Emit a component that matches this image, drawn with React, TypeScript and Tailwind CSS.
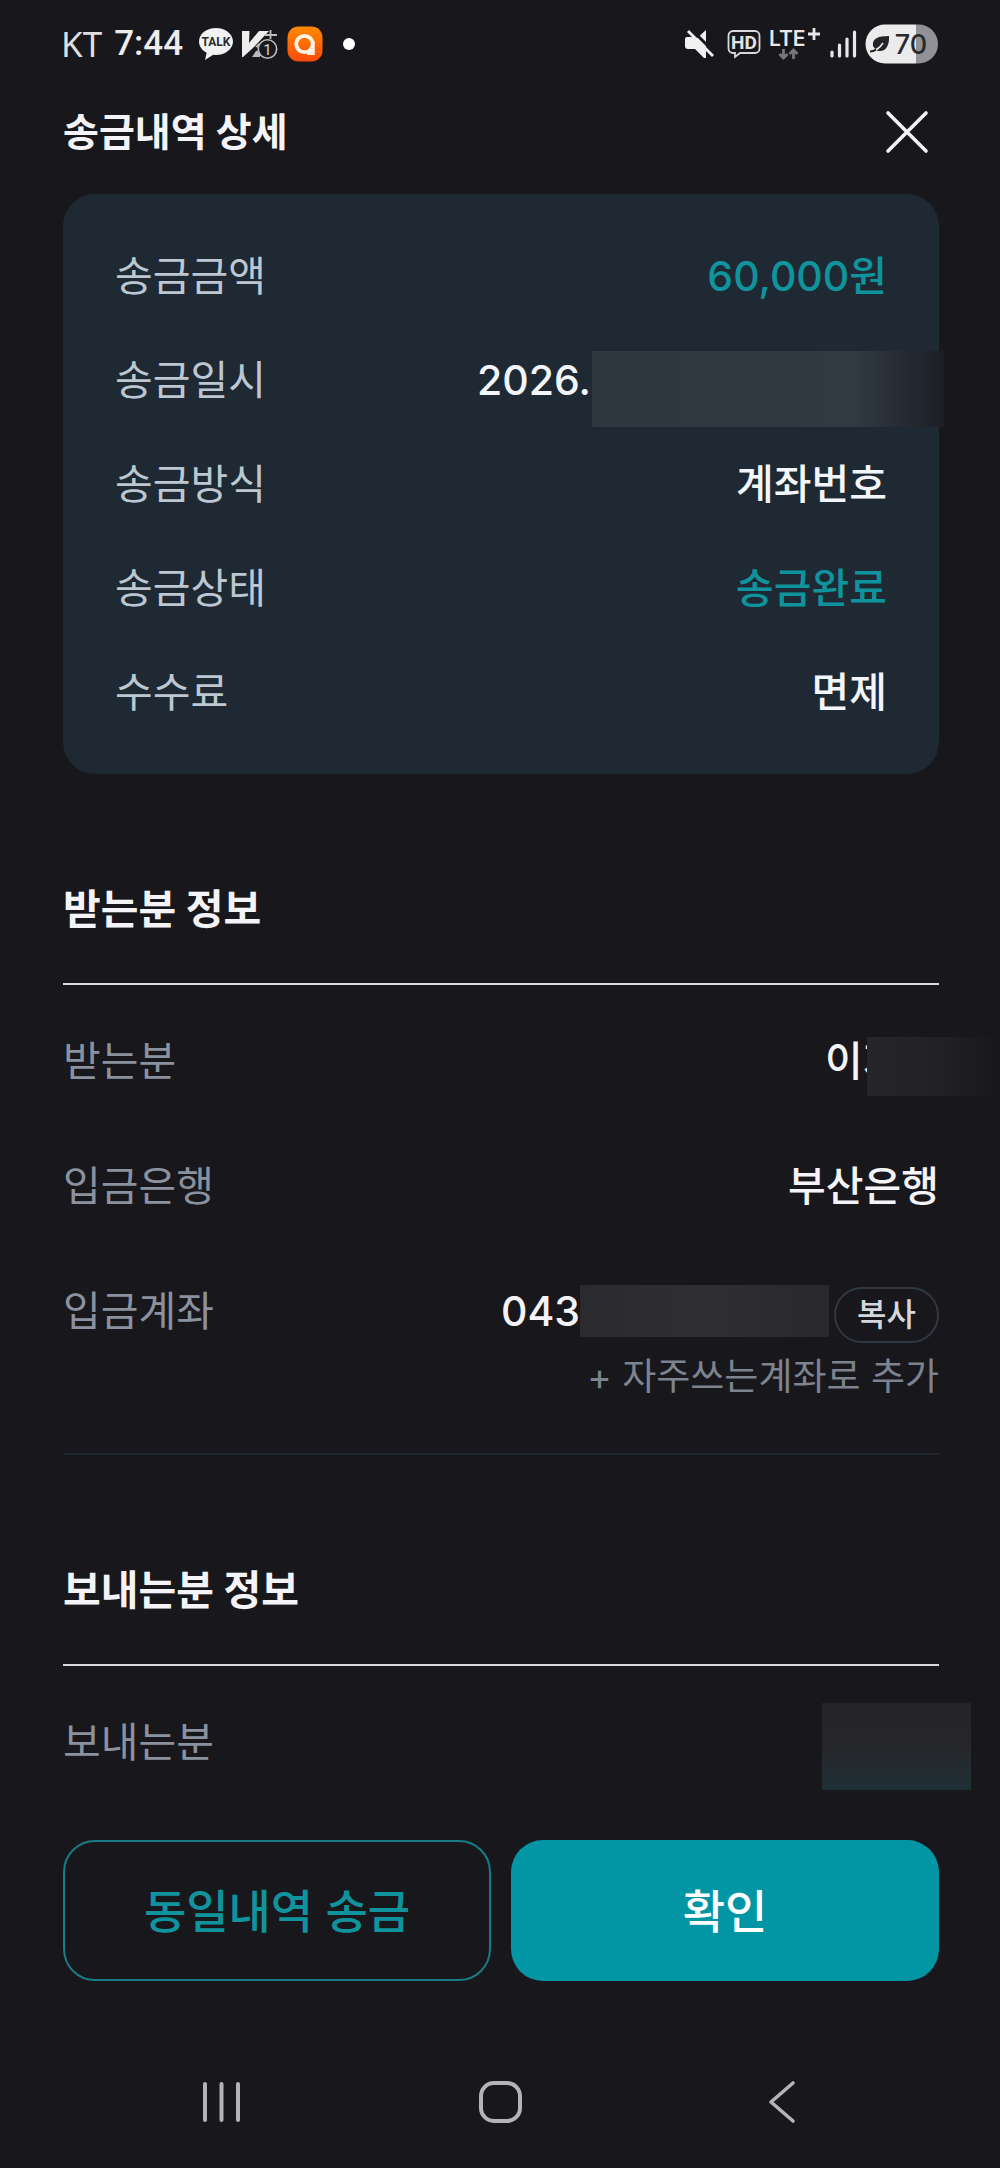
import type { ReactNode } from "react";
import clsx from "clsx";

const summary = [
  { label: "송금금액", value: "60,000원", accent: true },
  { label: "송금일시", value: "2026.", masked: true },
  { label: "송금방식", value: "계좌번호" },
  { label: "송금상태", value: "송금완료", accent: true },
  { label: "수수료", value: "면제" },
];

function StatusBar() {
  return (
    <div className="flex h-[88px] items-center justify-between px-[61px]">
      <div className="flex items-center">
        <span className="font-['Noto_Sans'] text-[35px] leading-[40px] text-[#dededf]">KT</span>
        <span className="ml-3 font-[Roboto] text-[35px] font-medium leading-[40px] text-[#ececee]">7:44</span>
        <svg className="ml-4" width="34" height="34" viewBox="0 0 34 34" aria-label="KakaoTalk">
          <path d="M17 1C7.600 1 0 6.800 0 14.500c0 4.800 3.100 8.900 7.700 11.200L6 33l8.200-5.200c.9.200 1.800.2 2.800.2 9.400 0 17-5.900 17-13.500S26.400 1 17 1z" fill="#f2f2f3" />
          <text x="17" y="19" fontFamily="Roboto" fontSize="12" fontWeight="700" textAnchor="middle" fill="#2a2a2e">TALK</text>
        </svg>
        <svg className="ml-2" width="38" height="34" viewBox="0 0 38 34" aria-label="알림">
          <path d="M1 4h7.500L8 16 18 4h10L12 21 2 30H1z" fill="#ededee" />
          <path d="M11 30l4-6 4-1v7zM14 20l4-4 1 5z" fill="#b9b9bc" />
          <path d="M29.500 3v9M24 8h12" stroke="#bdbdc0" strokeWidth="1.800" />
          <circle cx="26.500" cy="22" r="9.200" fill="#19191d" stroke="#bdbdc0" strokeWidth="1.600" />
          <text x="26.500" y="27.500" fontFamily="Roboto" fontSize="15" textAnchor="middle" fill="#d5d5d8">1</text>
        </svg>
        <svg className="ml-2" width="36" height="36" viewBox="0 0 36 36" aria-label="앱">
          <defs>
            <linearGradient id="orange" x1="0" y1="0" x2="0" y2="1">
              <stop offset="0" stopColor="#ff8a00" />
              <stop offset="1" stopColor="#fb4a0c" />
            </linearGradient>
          </defs>
          <rect x="0.500" y="0.500" width="35" height="35" rx="11" fill="url(#orange)" />
          <circle cx="17.500" cy="18" r="8.200" fill="none" stroke="#fff3e6" strokeWidth="3.800" />
          <path d="M26 15v12.200h-6" fill="none" stroke="#fff3e6" strokeWidth="3.400" />
        </svg>
        <span className="ml-5 size-3 rounded-full bg-white" />
      </div>

      <div className="flex items-center">
        <svg className="mr-3" width="30" height="30" viewBox="0 0 30 30" aria-label="무음">
          <path d="M0 10q0-2 2-2h5l4 2L21 1v28h-2l-9-9H3q-3 0-3-3z" fill="#f1f1f2" />
          <path d="M6 0l24 24" stroke="#19191d" strokeWidth="3" />
          <path d="M3 2l25 25" stroke="#f1f1f2" strokeWidth="2.800" />
        </svg>
        <svg className="mr-2" width="34" height="30" viewBox="0 0 34 30" aria-label="HD">
          <path d="M6 2h22a4.500 4.500 0 0 1 4.500 4.500v13A4.500 4.500 0 0 1 28 24H13l-5 4V24H6a4.500 4.500 0 0 1-4.500-4.500v-13A4.500 4.500 0 0 1 6 2z" fill="none" stroke="#d8d8da" strokeWidth="1.800" />
          <text x="17" y="20" fontFamily="Roboto" fontSize="19" fontWeight="700" textAnchor="middle" fill="#e3e3e5">HD</text>
        </svg>
        <svg className="mr-2" width="52" height="36" viewBox="0 0 52 36" aria-label="LTE+">
          <text x="0" y="20" fontFamily="Inter" fontSize="21" fontWeight="600" fill="#e8e8ea">LTE</text>
          <path d="M45 2v12M39 8h12" stroke="#e8e8ea" strokeWidth="2.800" />
          <path d="M14.500 23v9M10.500 28l4 4 4-4M24.500 33v-9M20.500 28l4-4 4 4" fill="none" stroke="#77777b" strokeWidth="2.800" />
        </svg>
        <svg className="mr-2" width="28" height="28" viewBox="0 0 28 28" aria-label="신호">
          <path d="M3 22v4M10.500 15v11M18 9v17M25.500 2v24" stroke="#e8e8ea" strokeWidth="3.200" strokeLinecap="round" />
        </svg>
        <svg width="74" height="40" viewBox="0 0 74 40" aria-label="배터리">
          <path d="M20 0.500h31v39H20a19.500 19.500 0 0 1 0-39z" fill="#ebebec" />
          <path d="M51 0.500h2.500a19.500 19.500 0 0 1 0 39H51z" fill="#929295" />
          <path d="M8 22c-1-7 4-10 16-10 .5 9-3 15-9 15-2 0-3-.3-4-1z" fill="#242428" />
          <path d="M5 27q8 0 13-8" fill="none" stroke="#ebebec" strokeWidth="1.600" />
          <path d="M5 27.500q3.500 0 6-2" fill="none" stroke="#242428" strokeWidth="2" />
          <text x="46" y="30" fontFamily="Inter" fontSize="27" fontWeight="500" textAnchor="middle" fill="#2a2a2e">70</text>
        </svg>
      </div>
    </div>
  );
}

function InfoRow({ label, children }: { label: string; children: ReactNode }) {
  return (
    <div className="flex h-16 items-center justify-between">
      <dt className="text-[#8b929f]">{label}</dt>
      <dd className="flex items-center font-medium text-[#f4f4f8]">{children}</dd>
    </div>
  );
}

function SectionTitle({ children }: { children: ReactNode }) {
  return (
    <h2 className="mt-[103px] border-b-2 border-[#d9d9dc] pb-[42px] text-[41px] font-bold leading-[64px] text-[#f4f4f8]">
      {children}
    </h2>
  );
}

export default function App() {
  return (
    <div className="flex min-h-screen flex-col overflow-hidden bg-[#18171c] font-[Inter,'Noto_Sans_CJK_KR',sans-serif] text-[41px] leading-[64px]">
      <StatusBar />

      <header className="flex h-[88px] items-center justify-between pl-[63px] pr-[62px]">
        <h1 className="text-[39px] font-bold text-[#f4f4f8]">송금내역 상세</h1>
        <button type="button" aria-label="닫기" className="p-2">
          <svg width="46" height="46" viewBox="0 0 46 46">
            <path d="M4 4l38 38M42 4L4 42" stroke="#f4f4f8" strokeWidth="3.600" strokeLinecap="round" />
          </svg>
        </button>
      </header>

      <main className="pl-[63px] pr-[61px]">
        <dl className="mt-[18px] flex flex-col gap-10 rounded-[32px] bg-[#1f2933] px-[52px] py-[50px]">
          {summary.map((row) => (
            <div key={row.label} className="flex h-16 items-center justify-between">
              <dt className="text-[#bcc7d2]">{row.label}</dt>
              <dd className={clsx("font-medium", row.accent ? "text-[#0f949e]" : "text-[#f2f5fa]", row.masked && "relative w-[410px]")}>
                {row.value}
                {row.masked && (
                  <span className="absolute -right-[57px] top-[3px] h-[76px] w-[352px] bg-linear-to-r from-[#2d3740] via-[#303a43] via-75% to-[#1d1f26]" />
                )}
              </dd>
            </div>
          ))}
        </dl>

        <section>
          <SectionTitle>받는분 정보</SectionTitle>
          <dl className="flex flex-col gap-[61px] pt-11">
            <InfoRow label="받는분">
              <span className="relative w-[114px] whitespace-nowrap">
                이지
                <span className="absolute left-[42px] top-2 h-[59px] w-[134px] bg-linear-to-r from-[#26262a] via-[#222226] to-[#18171c]" />
              </span>
            </InfoRow>
            <InfoRow label="입금은행">부산은행</InfoRow>
            <InfoRow label="입금계좌">
              043
              <span className="h-[52px] w-[249px] bg-linear-to-r from-[#2b2b2f] via-[#2f2f33] to-[#29292d]" />
              <button type="button" className="ml-[5px] h-14 w-[105px] self-end rounded-full border-2 border-[#303841] text-[32px] leading-[48px] text-[#d5d7dd]">
                복사
              </button>
            </InfoRow>
          </dl>
          <div className="mt-[10px] flex justify-end border-b-2 border-[#1d242c] pb-[52px]">
            <button type="button" className="text-[37px] leading-[48px] text-[#7d838f]">+ 자주쓰는계좌로 추가</button>
          </div>
        </section>

        <section>
          <SectionTitle>보내는분 정보</SectionTitle>
          <dl className="pt-11">
            <InfoRow label="보내는분">
              <span className="-mr-8 mt-2 h-[87px] w-[149px] bg-linear-to-b from-[#242428] via-[#26272b] via-55% to-[#1d3036]" />
            </InfoRow>
          </dl>
        </section>

        <div className="mt-[66px] grid grid-cols-2 gap-5 text-[46px] font-medium">
          <button type="button" className="h-[141px] rounded-[32px] border-2 border-[#177c85] text-[#0f949e]">동일내역 송금</button>
          <button type="button" className="h-[141px] rounded-[32px] bg-[#0296a5] text-white">확인</button>
        </div>
      </main>

      <nav className="mt-auto flex h-[132px] items-center justify-between px-[200px]">
        <button type="button" aria-label="최근 앱">
          <svg width="44" height="44" viewBox="0 0 44 44">
            <path d="M5 4v36M21.500 4v36M38 4v36" stroke="#b4b4b6" strokeWidth="4" strokeLinecap="round" />
          </svg>
        </button>
        <button type="button" aria-label="홈">
          <svg width="44" height="44" viewBox="0 0 44 44">
            <rect x="3" y="3" width="39" height="38" rx="13" fill="none" stroke="#b4b4b6" strokeWidth="4" />
          </svg>
        </button>
        <button type="button" aria-label="뒤로">
          <svg width="44" height="44" viewBox="0 0 44 44">
            <path d="M37 3L15 22l22 19" fill="none" stroke="#b4b4b6" strokeWidth="3.600" strokeLinecap="round" strokeLinejoin="round" />
          </svg>
        </button>
      </nav>
    </div>
  );
}
